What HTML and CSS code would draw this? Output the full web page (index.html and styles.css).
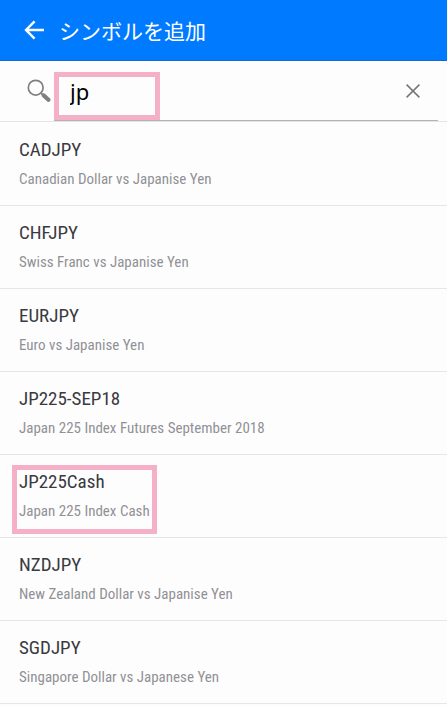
FILE: index.html
```html
<!DOCTYPE html>
<html lang="ja">
<head>
    <meta charset="utf-8">
    <meta name="viewport" content="width=device-width, initial-scale=1">
    <title>シンボルを追加</title>
    <link rel="stylesheet" href="styles.css">
</head>
<body>
    <header class="app-bar">
        <button type="button" class="icon-btn" aria-label="戻る">
            <svg width="22" height="20" viewBox="0 0 22 20" fill="none" stroke="#fff" stroke-width="2.4">
                <path d="M20 10H2.5M10.6 1.4L2 10l8.6 8.6"/>
            </svg>
        </button>
        <h1>シンボルを追加</h1>
    </header>

    <!-- Search -->
    <form class="search" role="search">
        <svg class="search-icon" width="24" height="24" viewBox="0 0 24 24" fill="none" stroke="#808080">
            <circle cx="8.7" cy="8.7" r="7.4" stroke-width="1.7"/>
            <path d="M14 14l3 3" stroke-width="1.8"/>
            <path d="M16.8 16.4l4.6 4.4" stroke-width="4.2" stroke-linecap="round"/>
        </svg>
        <div class="search-field">
            <div class="highlight">
                <input type="text" name="q" value="jp" aria-label="シンボルを検索">
            </div>
            <button type="reset" class="icon-btn" aria-label="クリア">
                <svg width="14" height="14" viewBox="0 0 14 14" fill="none" stroke="#777" stroke-width="1.5">
                    <path d="M.6.6l12.8 12.8M13.4.6L.6 13.4"/>
                </svg>
            </button>
        </div>
    </form>

    <!-- Symbols -->
    <ul class="symbols">
        <li>
            <h2>CADJPY</h2>
            <p>Canadian Dollar vs Japanise Yen</p>
        </li>
        <li>
            <h2>CHFJPY</h2>
            <p>Swiss Franc vs Japanise Yen</p>
        </li>
        <li>
            <h2>EURJPY</h2>
            <p>Euro vs Japanise Yen</p>
        </li>
        <li>
            <h2>JP225-SEP18</h2>
            <p>Japan 225 Index Futures September 2018</p>
        </li>
        <li class="marked">
            <h2>JP225Cash</h2>
            <p>Japan 225 Index Cash</p>
        </li>
        <li>
            <h2>NZDJPY</h2>
            <p>New Zealand Dollar vs Japanise Yen</p>
        </li>
        <li>
            <h2>SGDJPY</h2>
            <p>Singapore Dollar vs Japanese Yen</p>
        </li>
    </ul>
</body>
</html>
```

FILE: styles.css
```css
*, *::after {
    box-sizing: border-box;
}
body {
    margin: 0;
    background-color: #fdfdfe;
    font-family: "Roboto Condensed", "Liberation Sans Narrow", Roboto, sans-serif;
}
h1, h2, p, ul {
    margin: 0;
    padding: 0;
    font-weight: normal;
}
.icon-btn {
    display: flex;
    padding: 0;
    border: none;
    background: none;
    cursor: pointer;
}
.app-bar {
    display: flex;
    align-items: center;
    gap: 13px;
    height: 61px;
    padding-left: 24px;
    background-color: #007aff;
    border-bottom: 1px solid #1a68c4;
}
.app-bar h1 {
    color: #fff;
    font-family: "Noto Sans CJK JP", sans-serif;
    font-size: 21px;
    line-height: 28px;
}
.search {
    display: flex;
    align-items: center;
    height: 61px;
    padding: 0 9px 0 27px;
    border-bottom: 1px solid #e4e4e8;
}
.search-icon {
    flex: none;
    margin-right: 3px;
}
.search-field {
    flex: 1;
    display: flex;
    align-items: flex-end;
    justify-content: space-between;
    height: 100%;
    padding-right: 18px;
    border-bottom: 1px solid #b4b4b4;
}
.search-field .icon-btn {
    align-self: center;
}
.highlight {
    width: 106px;
    height: 48px;
    border: 5px solid #f5b0c8;
}
.highlight input {
    display: block;
    width: 100%;
    height: 28px;
    padding: 0 0 0 11px;
    border: none;
    outline: none;
    background: none;
    color: #000;
    font-family: "Noto Sans", sans-serif;
    font-size: 22px;
}
.symbols {
    padding-top: 1px;
    list-style: none;
}
.symbols li {
    position: relative;
    height: 83px;
    padding: 13px 19px 0;
    border-bottom: 1px solid #e6e6ea;
}
.symbols h2 {
    color: #3a3a3e;
    font-size: 19px;
    line-height: 28px;
}
.symbols p {
    margin-top: 4px;
    color: #919195;
    font-size: 15px;
    line-height: 22px;
}
/* frame over the marked symbol */
.marked::after {
    content: "";
    position: absolute;
    top: 10px;
    left: 12px;
    width: 145px;
    height: 69px;
    border: 5px solid #f5b0c8;
}
```
